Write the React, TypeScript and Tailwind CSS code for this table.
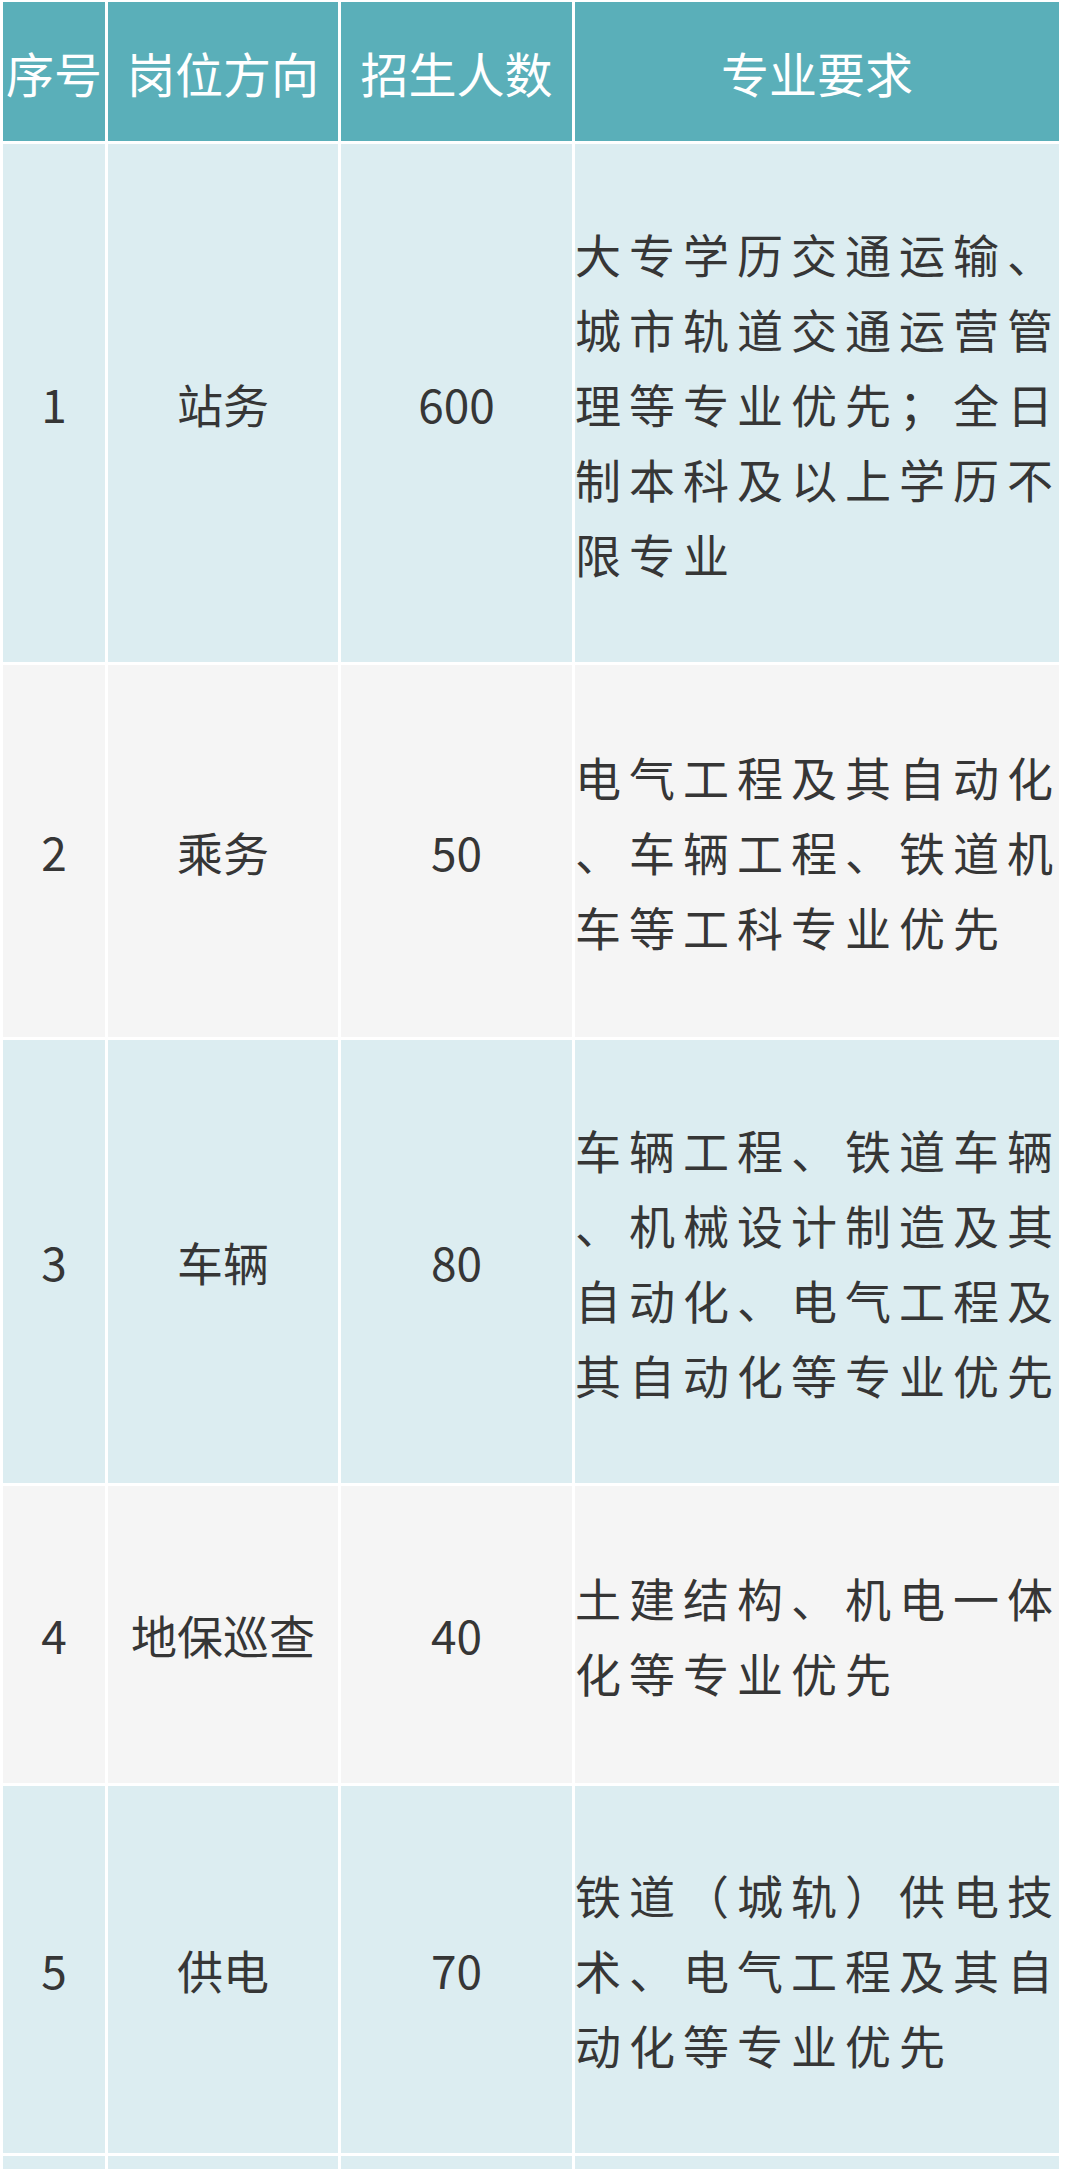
import React from 'react';

const rows = [
  { no: '1', post: '站务', count: '600', h: 'h-[518px]', bg: 'bg-[#dcedf1]', lines: ['大专学历交通运输、', '城市轨道交通运营管', '理等专业优先；全日', '制本科及以上学历不', '限专业'] },
  { no: '2', post: '乘务', count: '50', h: 'h-[372px]', bg: 'bg-[#f5f5f5]', lines: ['电气工程及其自动化', '、车辆工程、铁道机', '车等工科专业优先'] },
  { no: '3', post: '车辆', count: '80', h: 'h-[443px]', bg: 'bg-[#dcedf1]', lines: ['车辆工程、铁道车辆', '、机械设计制造及其', '自动化、电气工程及', '其自动化等专业优先'] },
  { no: '4', post: '地保巡查', count: '40', h: 'h-[297px]', bg: 'bg-[#f5f5f5]', lines: ['土建结构、机电一体', '化等专业优先'] },
  { no: '5', post: '供电', count: '70', h: 'h-[367px]', bg: 'bg-[#dcedf1]', lines: ['铁道（城轨）供电技', '术、电气工程及其自', '动化等专业优先'] },
];

const headers = ['序号', '岗位方向', '招生人数', '专业要求'];

export default function App() {
  return (
    <div
      className="w-[1080px] h-[2169px] overflow-hidden bg-white pl-[3px] pt-[2px] text-[#363636]"
      style={{ fontFamily: '"Noto Sans CJK SC", "Noto Sans", sans-serif' }}
    >
      <div className="grid grid-cols-[102px_230px_231px_484px] gap-[3px]">
        {headers.map((h) => (
          <div key={h} className="h-[139px] bg-[#5aafb9] text-white text-[48px] leading-none flex items-center justify-center whitespace-nowrap">
            {h}
          </div>
        ))}
        {rows.map((r) => (
          <React.Fragment key={r.no}>
            <div className={`${r.h} ${r.bg} flex items-center justify-center text-[46px]`}>{r.no}</div>
            <div className={`${r.h} ${r.bg} flex items-center justify-center text-[46px] whitespace-nowrap`}>{r.post}</div>
            <div className={`${r.h} ${r.bg} flex items-center justify-center text-[46px]`}>{r.count}</div>
            <div className={`${r.h} ${r.bg} flex flex-col justify-center text-[46px] leading-[75px] tracking-[8px]`}>
              {r.lines.map((l, i) => (
                <div key={i} className="whitespace-nowrap">{l}</div>
              ))}
            </div>
          </React.Fragment>
        ))}
        <div className="h-[20px] bg-[#dcedf1]" />
        <div className="h-[20px] bg-[#dcedf1]" />
        <div className="h-[20px] bg-[#dcedf1]" />
        <div className="h-[20px] bg-[#dcedf1]" />
      </div>
    </div>
  );
}
